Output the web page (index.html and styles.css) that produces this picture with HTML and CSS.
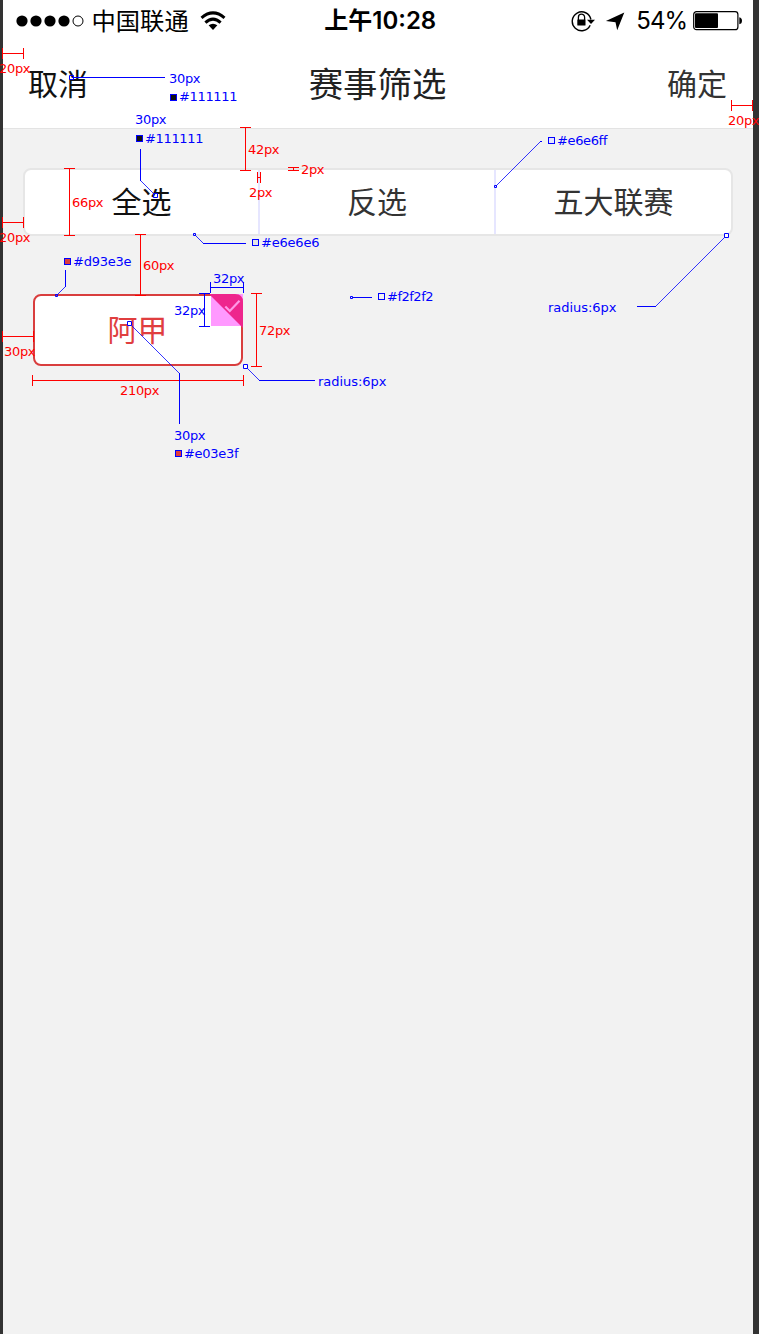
FILE: index.html
```html
<!DOCTYPE html>
<html lang="zh-CN">
<head>
<meta charset="utf-8">
<title>赛事筛选</title>
<link rel="stylesheet" href="styles.css">
</head>
<body>
<main class="phone">
  <header class="top">
    <div class="status">
      <div class="status-side">
        <svg class="signal" width="69" height="12" viewBox="0 0 69 12"><circle cx="6" cy="6" r="5.6"/><circle cx="20" cy="6" r="5.6"/><circle cx="34" cy="6" r="5.6"/><circle cx="48" cy="6" r="5.6"/><circle cx="62" cy="6" r="5" class="hollow"/></svg>
        <span class="carrier">中国联通</span>
        <svg class="wifi" width="26" height="20" viewBox="0 0 26 20"><path class="arc" d="M1.500 6.800Q13-3 24.500 6.800M5.400 11.600Q13 4.600 20.600 11.600"/><path d="M8.600 14.300Q13 11 17.400 14.300L13 19Z"/></svg>
      </div>
      <span class="clock">上午10:28</span>
      <div class="status-side status-right">
        <svg class="lock" width="24" height="22" viewBox="0 0 24 22"><path class="ring" d="M19.2 15.2A9.4 9.4 0 1 1 19.9 9.5"/><path d="M16 9.7H24L20 14Z"/><path class="shackle" d="M7.4 10V7.2A3.1 3.1 0 0 1 13.6 7.2V10"/><rect x="6.3" y="9.4" width="8.2" height="6.1" rx=".5"/></svg>
        <svg class="arrow" width="20" height="20" viewBox="0 0 20 20"><path d="M.9 10L19.300 1.500L12.200 19.300L10.500 11.200Z"/></svg>
        <span class="percent">54%</span>
        <svg class="battery" width="50" height="20" viewBox="0 0 50 20"><rect x=".7" y=".7" width="44.2" height="18" rx="2.8" class="shell"/><rect x="2" y="2.2" width="23" height="14.8" rx="1"/><path d="M46.3 6.3Q49 6.8 49 9.8Q49 12.8 46.3 13.3Z"/></svg>
      </div>
    </div>
    <nav class="nav">
      <span class="cancel">取消</span>
      <h1 class="title">赛事筛选</h1>
      <span class="confirm">确定</span>
    </nav>
  </header>
  <div class="segments">
    <div class="segment active">全选</div>
    <div class="segment">反选</div>
    <div class="segment">五大联赛</div>
  </div>
  <div class="league">阿甲
    <svg class="corner" width="33" height="34" viewBox="0 0 33 34"><rect x="1" width="32" height="32" class="corner-bg"/><path class="corner-fill" d="M-1 0H25Q33 0 33 8V34Z"/><path class="check" d="M15.300 12.500L19.800 17L29.500 6.700"/></svg>
  </div>
</main>
<svg class="notes" width="759" height="1334" viewBox="0 0 759 1334">
  <g class="red-line">
    <path d="M2.5 48V59M23.5 48V59M2 53.5H23"/>
    <path d="M731.5 100V111M752.5 100V111M731 105.5H753"/>
    <path d="M240 127.5H251M240 170.5H251M245.5 127V171"/>
    <path d="M64 168.5H75M64 235.5H75M69.5 168V236"/>
    <path d="M2.5 217V228M23.5 217V228M2 222.5H24"/>
    <path d="M257.5 172V183M260.5 172V183M258 177.5H260"/>
    <path d="M288 167.5H299M288 170.5H299M293.5 168V171"/>
    <path d="M135 234.5H146M135 295.5H146M140.5 234V296"/>
    <path d="M2.5 331V342M33.5 331V342M2 336.5H34"/>
    <path d="M32.5 375V386M243.5 375V386M32 380.5H244"/>
    <path d="M251 293.5H262M251 366.5H262M256.5 293V367"/>
  </g>
  <g class="blue-line">
    <path d="M72 77.5H165M140.5 149V181M203 243.5H246M637 306.5H656M65.5 270V287M352 297.5H372M179.5 373V424M259 380.5H315M540 141.5H542"/>
    <path d="M210.5 282V293M243.5 282V293M210 287.5H244M199 293.5H210M199 326.5H210M204.5 293V327"/>
  </g>
  <path class="slant" d="M140.5 180.5L154 194M195 235L203.5 243.5M540.5 141.5L496 186M655.5 306.5L725 237M65.500 286.500L57 295M131 325L179.5 373.5M247 368L259.5 380.5"/>
  <g class="pin">
    <path d="M69.500 75.500h4v4h-4zM153.500 193.500h4v4h-4zM193.500 233.500h2v2h-2zM494.500 185.500h2v2h-2zM350.500 296.500h2v2h-2zM55.500 294.500h2v2h-2z"/>
    <path class="pin-solid" d="M724.500 233.500h4v4h-4zM127.500 321.500h4v4h-4zM243.500 364.500h4v4h-4z"/>
  </g>
  <g class="swatch">
    <rect x="170.500" y="94.500" width="6" height="6" fill="#111"/>
    <rect x="136.500" y="135.500" width="6" height="6" fill="#111"/>
    <rect x="252.500" y="239.500" width="6" height="6" fill="#e6e6e6"/>
    <rect x="548.500" y="137.500" width="6" height="6" fill="#e6e6ff"/>
    <rect x="378.500" y="293.500" width="6" height="6" fill="#f2f2f2"/>
    <rect x="64.500" y="258.500" width="6" height="6" fill="#d93e3e"/>
    <rect x="175.500" y="450.500" width="6" height="6" fill="#e03e3f"/>
  </g>
  <g class="red-text">
    <text x="-1" y="73" textLength="31.500">20px</text>
    <text x="728" y="125" textLength="31.500">20px</text>
    <text x="248" y="154" textLength="31.500">42px</text>
    <text x="249" y="197" textLength="23.500">2px</text>
    <text x="301" y="174" textLength="23.500">2px</text>
    <text x="72" y="207" textLength="31.500">66px</text>
    <text x="-1" y="242" textLength="31.500">20px</text>
    <text x="143" y="270" textLength="31.500">60px</text>
    <text x="4" y="356" textLength="31.500">30px</text>
    <text x="259" y="335" textLength="31.500">72px</text>
    <text x="120" y="395" textLength="39.500">210px</text>
  </g>
  <g class="blue-text">
    <text x="169" y="83" textLength="31.500">30px</text>
    <text x="179" y="101" textLength="58.500">#111111</text>
    <text x="135" y="124" textLength="31.500">30px</text>
    <text x="145" y="143" textLength="58.500">#111111</text>
    <text x="557" y="145" textLength="50.500">#e6e6ff</text>
    <text x="261" y="247" textLength="58.500">#e6e6e6</text>
    <text x="73" y="266" textLength="58.500">#d93e3e</text>
    <text x="213" y="283" textLength="31.500">32px</text>
    <text x="174" y="315" textLength="31.500">32px</text>
    <text x="387" y="301" textLength="46.500">#f2f2f2</text>
    <text x="548" y="312" textLength="68.500">radius:6px</text>
    <text x="318" y="386" textLength="68.500">radius:6px</text>
    <text x="174" y="440" textLength="31.500">30px</text>
    <text x="184" y="458" textLength="54.500">#e03e3f</text>
  </g>
</svg>
</body>
</html>
```

FILE: styles.css
```css
* { box-sizing: border-box; }
body {
  margin: 0;
  height: 1334px;
  overflow: hidden;
  background: #333;
  font-family: "Noto Sans CJK SC", sans-serif;
}
svg { display: block; flex: none; }
.phone {
  width: 750px;
  height: 1334px;
  margin-left: 3px;
  background: #f2f2f2;
}
.top {
  height: 129px;
  background: #fff;
  border-bottom: 1px solid #e3e3e3;
}
.status {
  display: grid;
  grid-template-columns: 1fr auto 1fr;
  align-items: center;
  height: 41px;
  padding: 0 10px 0 12.5px;
  color: #000;
}
.status-side { display: flex; align-items: center; }
.status-right { justify-content: flex-end; }
.signal .hollow { fill: none; stroke: #000; stroke-width: 1; }
.carrier { margin-left: 7px; padding-bottom: 3px; font-size: 24.3px; line-height: 37px; }
.wifi { margin-left: 11px; }
.wifi .arc { fill: none; stroke: #000; stroke-width: 3; }
.clock {
  padding: 1px 0 0 2px;
  font: 600 24px/40px Inter, "Noto Sans CJK SC", sans-serif;
}
.lock { margin-right: 10px; }
.lock .ring { fill: none; stroke: #000; stroke-width: 1.4; }
.lock .shackle { fill: none; stroke: #000; stroke-width: 1.3; }
.arrow { margin-right: 11px; }
.percent {
  margin-right: 6px;
  padding-top: 1px;
  font: 400 24px/40px Inter, sans-serif;
  letter-spacing: -1px;
}
.battery .shell { fill: none; stroke: #000; stroke-width: 1.2; }
.nav {
  display: grid;
  grid-template-columns: 1fr auto 1fr;
  align-items: center;
  height: 82px;
  padding: 0 26px 0 25px;
  font-size: 30px;
}
.cancel { color: #111; }
.title { margin: 0; font-size: 34.4px; font-weight: 400; line-height: 48px; color: #222; }
.confirm { color: #333; text-align: right; }
.segments {
  display: grid;
  grid-template-columns: 233px 236px 1fr;
  width: 710px;
  height: 68px;
  margin: 39px 0 0 20px;
  border: 2px solid #e6e6e6;
  border-radius: 8px;
  background: #fff;
}
.segment {
  border-left: 2px solid #e6e6ff;
  font-size: 30px;
  line-height: 60px;
  text-align: center;
  color: #333;
}
.segment:first-child { border-left: 0; }
.active { color: #111; }
.league {
  position: relative;
  width: 210px;
  height: 72px;
  margin: 58px 0 0 30px;
  padding-right: 1px;
  border: 2px solid #d93e3e;
  border-radius: 8px;
  background: #fff;
  color: #e03e3f;
  font-size: 30px;
  line-height: 65px;
  text-align: center;
}
.corner { position: absolute; top: -2px; right: -2px; }
.corner-bg { fill: #f9f; }
.corner-fill { fill: #ee258d; }
.check { fill: none; stroke: #ff99e8; stroke-width: 2.2; }
.notes { position: absolute; top: 0; left: 0; }
.red-line path { fill: none; stroke: #f00; }
.blue-line path { fill: none; stroke: #00f; }
.slant { fill: none; stroke: #00f; stroke-width: .8; }
.pin path { fill: none; stroke: #00f; }
.pin .pin-solid { fill: #fff; }
.swatch rect { stroke: #00f; }
.notes text { font: 13px "DejaVu Sans", sans-serif; }
.red-text { fill: #f00; }
.blue-text { fill: #00f; }
```
